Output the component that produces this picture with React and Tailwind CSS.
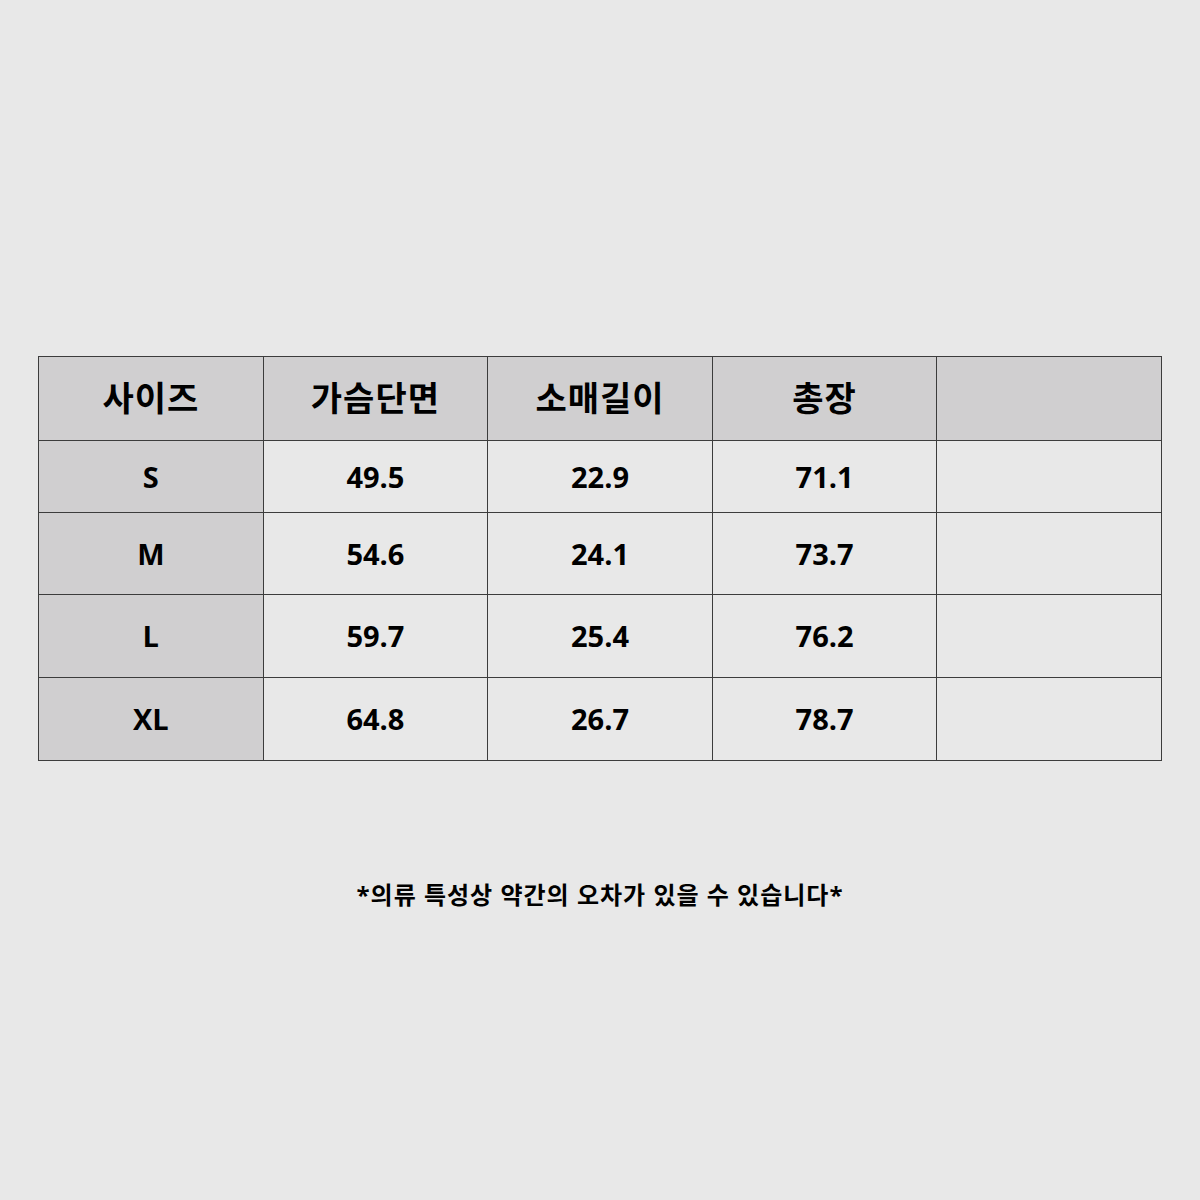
import React from 'react'

const rows = [
  { size: 'S', chest: '49.5', sleeve: '22.9', length: '71.1', h: 'h-[72px]' },
  { size: 'M', chest: '54.6', sleeve: '24.1', length: '73.7', h: 'h-[82px]' },
  { size: 'L', chest: '59.7', sleeve: '25.4', length: '76.2', h: 'h-[83px]' },
  { size: 'XL', chest: '64.8', sleeve: '26.7', length: '78.7', h: 'h-[83px]' },
]

const font = { fontFamily: '"Open Sans", "Noto Sans CJK KR", sans-serif' }

const App = () => {
  return (
    <div className="w-[1200px] h-[1200px] bg-[#e8e8e8] text-black" style={font}>
      <div className="pt-[356px] px-[38px]">
        <table className="w-[1124px] border-collapse table-fixed font-bold">
          <thead>
            <tr className="h-[84px] bg-[#d0cfd0]">
              {['사이즈', '가슴단면', '소매길이', '총장', ''].map((t, i) => (
                <th key={i} className="border border-[#3c3c3c] text-[34px] tracking-[1px] font-bold text-center align-middle">
                  {t}
                </th>
              ))}
            </tr>
          </thead>
          <tbody>
            {rows.map((r) => (
              <tr key={r.size} className={r.h}>
                <td className="border border-[#3c3c3c] bg-[#d0cfd0] text-[29px] text-center">{r.size}</td>
                <td className="border border-[#3c3c3c] text-[29px] text-center">{r.chest}</td>
                <td className="border border-[#3c3c3c] text-[29px] text-center">{r.sleeve}</td>
                <td className="border border-[#3c3c3c] text-[29px] text-center">{r.length}</td>
                <td className="border border-[#3c3c3c]"></td>
              </tr>
            ))}
          </tbody>
        </table>
      </div>
      <p className="mt-[116px] text-center text-[24px] tracking-[1px] font-bold">
        *의류 특성상 약간의 오차가 있을 수 있습니다*
      </p>
    </div>
  )
}

export default App
